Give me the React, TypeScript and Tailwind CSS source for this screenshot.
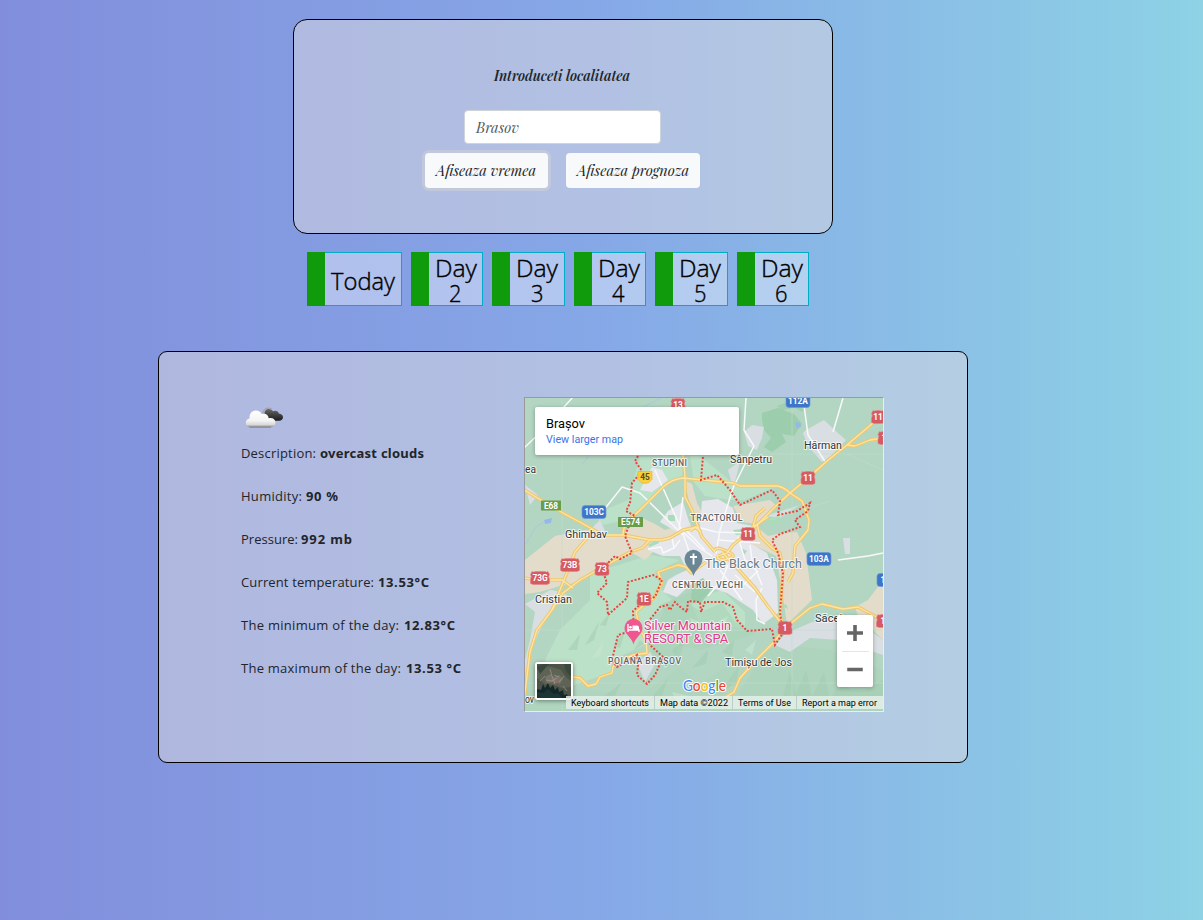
import React from "react";

const MAP_FONT = "Roboto, 'Liberation Sans', sans-serif";

const days = [
  { label: ["Today"], box: "w-[95px]" },
  { label: ["Day", "2"], box: "w-[72px]" },
  { label: ["Day", "3"], box: "w-[73px]" },
  { label: ["Day", "4"], box: "w-[72px]" },
  { label: ["Day", "5"], box: "w-[73px]" },
  { label: ["Day", "6"], box: "w-[72px]" },
];

const readings = [
  { name: "Description:", value: "overcast clouds", w1: 75, x2: 79, w2: 104 },
  { name: "Humidity:", value: "90 %", w1: 61, x2: 65, w2: 32 },
  { name: "Pressure:", value: "992 mb", w1: 57, x2: 60, w2: 51 },
  { name: "Current temperature:", value: "13.53°C", w1: 133, x2: 137, w2: 51 },
  { name: "The minimum of the day:", value: "12.83°C", w1: 158, x2: 163, w2: 51 },
  { name: "The maximum of the day:", value: "13.53 °C", w1: 160, x2: 165, w2: 55 },
];

/* Single line of text fitted to a given width. */
function FitText({ text, width, className, size, height, baseline, x = 0, spacing = false }: {
  text: string; width: number; className: string; size: number; height: number; baseline: number; x?: number; spacing?: boolean;
}) {
  return (
    <svg width={width + x} height={height} className="block shrink-0 overflow-visible">
      <text
        x={x} y={baseline} fontSize={size} textLength={width}
        lengthAdjust={spacing ? "spacing" : "spacingAndGlyphs"}
        className={className}
      >
        {text}
      </text>
    </svg>
  );
}

const serif = "font-['Playfair_Display','Liberation_Serif',serif] italic";
const sans = "font-['Noto_Sans',sans-serif]";
const openSans = "font-['Open_Sans',sans-serif]";

function CloudIcon() {
  return (
    <svg viewBox="0 0 50 35" className="block h-[35px] w-[50px]">
      <defs>
        <linearGradient id="cw" x1="0" y1="0" x2="0" y2="1">
          <stop offset="0" stopColor="#ffffff" />
          <stop offset="0.6" stopColor="#f4f4f4" />
          <stop offset="0.85" stopColor="#d8d8d8" />
          <stop offset="1" stopColor="#8a8a8a" />
        </linearGradient>
        <linearGradient id="cd" x1="0" y1="0" x2="0" y2="1">
          <stop offset="0" stopColor="#6a6a6a" />
          <stop offset="0.45" stopColor="#444" />
          <stop offset="1" stopColor="#1c1c1c" />
        </linearGradient>
      </defs>
      <path d="M24.500 14c-.3-3 1.800-5 4.300-5 2 0 3.500 1.100 4.300 2.300 2.300-1.300 5.300-.4 5.800 2.300 2.400.3 4.100 1.800 4.100 3.700 0 2.200-1.800 3.400-4 3.400H30z" fill="url(#cd)" />
      <path d="M23 14.500c-.2-3.800 1.900-6.400 5.300-6.400 1.500 0 2.600.5 3.500 1.200" fill="none" stroke="#a3a3ab" strokeWidth="1.300" />
      <path d="M10.200 27.200c-2.600 0-4.400-1.900-4.400-4.300 0-2.200 1.500-3.900 3.700-4.300-.4-4.300 2.200-8 6.400-8 2.700 0 4.900 1.500 5.700 3.500 3.400-1.400 7 .6 7.100 4.200 3.800-1.100 6.700 1 6.700 4.300 0 2.500-1.900 4.600-4.500 4.600z" fill="url(#cw)" />
      <path d="M9.500 27.200h21.500" stroke="#787a84" strokeWidth=".7" />
    </svg>
  );
}

const roads = [
  "M524 490L541 500 563 513 587 526 603 535 623 535 650 540 661 540 670 538 683 530 698 527",
  "M603 567L630 552 642 548 650 540",
  "M623 535C623 522 634 516 640 510L650 500 663 487Q672 479 683 478L703 480 733 483 740 486 777 486Q784 487 790 493L802 501 809 520 808 530 795 546 793 573 788 582",
  "M873 423L847 445 827 461 808 478 790 493 777 505 757 525 733 545 727 553 718 556",
  "M765 508L756 516 753 527 768 517",
  "M847 445L855 446 870 440 883 438",
  "M678 398L683 456 685 476 685 497 692 510 698 527 702 537 715 552",
  "M757 524L760 536 772 548 780 553 783 570 780 617 785 628",
  "M722 552L737 568 755 588 767 605 785 628 773 643 758 658 740 678 734 692 724 698",
  "M785 628L810 608 822 604 843 609 858 607 873 615 883 622",
  "M603 567L580 580 563 593 552 610 537 630 530 652 524 700",
  "M587 538L575 552 568 570 560 590 552 610",
  "M524 578L540 580 562 580 573 588",
  "M706 562L691 573 686 567 678 565 658 572 662 583 653 599 645 604 636 612 640 630 646 640 647 653 633 655 620 660 613 667 612 673 600 677 596 684 588 686 580 678 573 677",
  "M690 531L695 527 701 532M714 551Q716 547 722 549T732 554 727 559 717 556",
];

const whiteRoads = [
  "M524 448L545 428 573 397",
  "M746 398L744 430 754 446 733 488 720 530 716 553",
  "M803 398L808 435 826 463",
  "M843 398L833 432",
  "M603 511L622 487 640 493 683 535",
  "M655 470L682 531 692 560",
  "M683 497L679 530",
  "M682 531L700 548 712 556",
  "M684 528L705 550",
  "M701 528L716 532 750 533M700 517L733 520M738 537L745 560 758 572M750 545L752 560 762 585M718 540L760 543",
  "M838 560L868 556 883 553",
  "M720 570L742 600M735 575L755 592M757 572L740 588M762 588L756 600 757 620 765 624",
  "M648 549L661 547 663 553 674 548 680 540M672 538L674 548",
  "M708 596L722 580 728 565",
];

const border =
  "M638 456L635 461 642 471 632 483 630 503 626 511 635 516 628 528 625 536 632 553 620 559 615 556 602 569 607 583 597 593 607 602 608 615 627 598 628 582 653 575 662 580 655 597 645 600 633 611 634 630 618 635 612 660 617 667 637 655 638 665 637 675 647 684 655 675 663 657 650 645 648 622 660 607 667 605 670 610 675 602 679 606 687 612 688 601 700 602 701 612 705 602 723 602 733 607 737 620 747 631 772 629 775 645 783 633 780 613 783 573 778 553 772 540 780 534 800 527 795 520 808 511 810 503 797 511 778 515 780 501 772 490 740 505 730 490 717 475 701 480 703 456";

type Lbl = { t: string; x: number; y: number; w: number; s: number; c?: string; wt?: number };
const labels: Lbl[] = [
  { t: "ea", x: 525, y: 473, w: 11, s: 11 },
  { t: "STUPINI", x: 652, y: 466, w: 35, s: 8.6, c: "#5f6368", wt: 500 },
  { t: "Ghimbav", x: 565, y: 538, w: 42, s: 11 },
  { t: "Sânpetru", x: 730, y: 462.5, w: 42, s: 11 },
  { t: "Hărman", x: 804, y: 449, w: 38, s: 11 },
  { t: "TRACTORUL", x: 690.5, y: 521, w: 52, s: 8.800, c: "#5f6368", wt: 500 },
  { t: "The Black Church", x: 705, y: 568, w: 97, s: 12.500, c: "#647d8b" },
  { t: "CENTRUL VECHI", x: 672, y: 588, w: 71, s: 8.600, c: "#5f6368", wt: 500 },
  { t: "Cristian", x: 535, y: 602.5, w: 37, s: 11 },
  { t: "Silver Mountain", x: 644, y: 630, w: 87, s: 12.500, c: "#e5378a" },
  { t: "RESORT & SPA", x: 644, y: 643, w: 84, s: 12.200, c: "#e5378a" },
  { t: "POIANA BRAȘOV", x: 608, y: 664, w: 73, s: 8.600, c: "#5f6368", wt: 500 },
  { t: "Timișu de Jos", x: 725, y: 666, w: 67, s: 11.200 },
  { t: "Săcele", x: 815, y: 622, w: 33, s: 11 },
  { t: "ov", x: 525, y: 703, w: 9, s: 10 },
];

type Shield = { t: string; x: number; y: number; w: number; k: "red" | "green" | "blue" | "yellow" };
const shields: Shield[] = [
  { t: "13", x: 678, y: 405, w: 13, k: "red" },
  { t: "112A", x: 798, y: 401, w: 24, k: "blue" },
  { t: "11", x: 878, y: 417, w: 12, k: "red" },
  { t: "1", x: 884, y: 438, w: 11, k: "red" },
  { t: "11", x: 808, y: 478, w: 13, k: "red" },
  { t: "45", x: 645, y: 477, w: 14, k: "yellow" },
  { t: "E68", x: 551, y: 505.5, w: 20, k: "green" },
  { t: "103C", x: 594, y: 512, w: 24, k: "blue" },
  { t: "E574", x: 630.5, y: 522, w: 25, k: "green" },
  { t: "11", x: 748, y: 534, w: 13, k: "red" },
  { t: "103A", x: 819, y: 559, w: 24, k: "blue" },
  { t: "1", x: 883, y: 580, w: 12, k: "blue" },
  { t: "73B", x: 570, y: 565, w: 18, k: "red" },
  { t: "73", x: 602, y: 569, w: 13, k: "red" },
  { t: "73G", x: 540, y: 578, w: 18, k: "red" },
  { t: "1E", x: 644, y: 599, w: 13, k: "red" },
  { t: "1", x: 785, y: 628, w: 13, k: "red" },
  { t: "1", x: 883, y: 621, w: 12, k: "red" },
];

const shieldFill = { red: "#d65a62", green: "#689d49", blue: "#3e75c9", yellow: "#f8cf3e" };

function RoadShield({ s }: { s: Shield }) {
  const h = s.k === "green" ? 10 : 13;
  const l = s.x - s.w / 2;
  const r = s.x + s.w / 2;
  const t = s.y - h / 2;
  const b = s.y + h / 2;
  return (
    <g>
      {s.k === "red" ? (
        <path
          d={`M${l + 1} ${t}q1.500 1 3 0H${r - 4}q1.500 1 3 0L${r + 0.5} ${t + 3}q-1.500 2 0 4.500V${b - 1}L${r - 2} ${b}H${l + 2}L${l - 0.5} ${b - 1}V${t + 7.5}q1.500-2.500 0-4.500z`}
          fill={shieldFill.red}
          stroke="#e38488"
          strokeWidth=".6"
        />
      ) : s.k === "yellow" ? (
        <path
          d={`M${l} ${t + 1}H${r}V${b - 4}L${r - 3} ${b - 1}Q${s.x} ${b + 1} ${l + 3} ${b - 1}L${l} ${b - 4}z`}
          fill={shieldFill.yellow} stroke="#e8b92d" strokeWidth=".7" strokeLinejoin="round"
        />
      ) : (
        <rect
          x={l} y={t} width={s.w} height={h}
          rx={s.k === "green" ? 0.5 : 3}
          fill={shieldFill[s.k]}
          stroke={s.k === "blue" ? "#6c98da" : "none"}
          strokeWidth=".7"
        />
      )}
      <text
        x={s.x} y={s.y + 3} textAnchor="middle" fontSize="8.300" fontWeight="700"
        fill={s.k === "yellow" ? "#5b4a14" : "#fff"}
      >
        {s.t}
      </text>
    </g>
  );
}

function MapCanvas() {
  return (
    <svg viewBox="525 398 358 313" className="block h-[313px] w-[358px]" style={{ fontFamily: MAP_FONT }}>
      <rect x="525" y="398" width="358" height="313" fill="#b3d6c2" />
      {/* lighter woodland and hills */}
      <g fill="#bbe1c8">
        <path d="M640 457L683 456 682 476 662 487 640 510 625 520 598 526 600 512 628 500z" />
        <path d="M700 456L733 483 773 488 745 500 730 500 705 496 694 482 690 456z" />
        <path d="M590 574L650 555 680 560 655 572 662 590 672 600 650 620 645 645 612 660 612 672 560 690 545 660 560 630 590 600z" />
        <path d="M690 600L722 590 745 612 745 628 700 625z" />
      </g>
      <g fill="#a9d3b7">
        <path d="M663 612L688 603 701 612 722 603 735 622 755 634 735 640 700 650 680 645 668 670 650 650z" opacity=".6" />
        <path d="M525 690L580 690 640 695 680 668 700 685 740 655 720 711H525z" opacity=".35" />
        <path d="M660 605L690 592 698 603 675 604 665 612z" opacity=".7" />
        <path d="M740 690L765 650 785 645 830 650 883 670V711H740z" opacity=".4" />
      </g>
      <g fill="#a0ccaf" opacity=".5">
        <path d="M600 625L610 612 606 626zM585 645L599 622 594 640zM568 650L580 634 577 650zM614 646L626 628 620 648zM672 650L685 640 678 662zM692 668L708 650 706 664zM722 690L740 664 736 684zM600 700L622 682 614 697zM640 640L634 650 644 644z" />
        <path d="M782 700L790 672 796 694 806 670 812 697 824 672 830 700 842 676 850 690 866 690 883 680V700zM700 640L718 632 708 646zM722 652L734 640 732 656zM650 700L668 678 662 696z" />
      </g>
      <g fill="#c6e6d1" opacity=".6">
        <path d="M590 660L604 640 600 656zM690 618L700 622 692 630zM712 625L728 616 722 634zM672 692L690 696 676 702zM745 650L756 640 752 655z" />
      </g>
      <g fill="#9ccdac">
        <path d="M777 406L800 398 810 403 802 412 795 408 782 410z" opacity=".8" />
        <path d="M762 413L778 408 794 414 802 424 794 436 782 434 786 442 772 452 764 447 771 438 764 430 762 420z" />
        <path d="M692 582L705 574 716 578 708 594 700 604 691 599z" />
      </g>
      {/* open land */}
      <g fill="#e3dccb">
        <path d="M525 560L555 536 585 530 628 536 632 555 603 567 580 582 560 586 540 592 525 594z" />
        <path d="M623 534L640 517 655 524 665 530 690 522 692 530 660 545 645 560 632 553z" />
        <path d="M684 480L692 484 697 503 706 520 702 530 690 505z" />
        <path d="M733 506L752 503 770 500 777 506 757 524 742 522z" />
        <path d="M757 527L768 536 782 533 797 532 806 553 812 600 787 624 782 590 776 556 764 550 752 545 748 538z" />
        <path d="M883 580L868 600 855 607 858 616 883 640z" />
      </g>
      {/* built-up land */}
      <g fill="#e5e7ec">
        <path d="M702 501L718 499 733 508 737 523 753 526 750 543 767 553 777 580 778 613 763 624 753 610 727 593 712 588 703 578 690 585 677 597 663 592 668 580 676 575 687 570 680 556 663 556 648 550 653 543 683 533 700 526z" />
        <path d="M668 511L683 502 690 525 677 532 660 522z" />
        <path d="M652 467L662 470 668 480 652 492 640 490z" />
        <path d="M765 516L800 505 780 518z" opacity=".6" />
      </g>
      <g fill="#d8dee1">
        <path d="M744 432L752 425 764 427 762 438 757 450 748 446z" />
        <path d="M728 470L740 461 737 474 733 488z" />
        <path d="M803 433L806 430 824 420 838 433 846 440 832 455 822 462 808 446z" />
        <path d="M843 538h7v16h-5z" />
        <path d="M775 645L785 634 812 622 850 616 883 640V655L862 648 840 640 810 638 790 652z" />
        <path d="M562 592L568 596 552 610 540 630 532 648 530 665 525 690V660L530 640 535 612 525 604 550 590z" />
        <path d="M637 663L650 652 656 662 645 682z" />
        <path d="M525 485L538 495 530 505zM580 540L600 520 606 533 598 540z" />
      </g>
      <g fill="#abdcba">
        <path d="M733 530l9-1 3 5-9 1zM668 515h7v6h-7zM765 520l14-4 4 6-12 3zM782 606l4-2 2 5zM741 548l6 3-3 4zM648 545l10-6 1 4-9 4z" />
      </g>
      <g fill="#94b9e8">
        <path d="M544 520l8-2-1 5-6 1zM796 422l4 1 1 4-5 1z" />
      </g>
      <g fill="none" stroke="#a6c3ea" strokeWidth=".8">
        <path d="M643 407L655 401 664 396M581 464Q587 461 590 452M525 545L536 527 545 521" />
      </g>
      <g fill="none" stroke="#c3dccf" strokeWidth=".6">
        <path d="M562 398V711M792 398V711M525 683H883M525 630H883M770 454H883M847 454L883 470M770 520L830 501M868 430L883 424" />
      </g>
      <g fill="none" stroke="#f8f9fb" strokeWidth="1.500" strokeLinejoin="round">
        {whiteRoads.map((d) => <path key={d} d={d} />)}
      </g>
      <g fill="none" stroke="#f0c76c" strokeWidth="3.400" strokeLinejoin="round">
        {roads.map((d) => <path key={d} d={d} />)}
      </g>
      <g fill="none" stroke="#fbe6a8" strokeWidth="1.300" strokeLinejoin="round">
        {roads.map((d) => <path key={d} d={d} />)}
      </g>
      <path d={border} fill="none" stroke="#e8453c" strokeWidth="2" strokeDasharray="2 1.700" />
      {shields.map((s) => <RoadShield key={s.t + s.x} s={s} />)}
      {/* church pin */}
      <path d="M693.500 576C691.500 569 684.500 566 684.500 558.800a9 9 0 0 1 18 0C702.500 566 695.500 569 693.500 576z" fill="#6b8796" />
      <path d="M693.500 553.500v11M690 557h7" stroke="#fff" strokeWidth="1.800" />
      {/* hotel pin */}
      <path d="M633.500 644.500C631.500 637 624.500 634.500 624.500 627.800a9 9 0 0 1 18 0C642.500 634.500 635.500 637 633.500 644.500z" fill="#f0568f" />
      <path d="M628 624v8M628.500 630h10.500V632" fill="none" stroke="#fff" strokeWidth="1.300" />
      <path d="M632.500 625.500h4.500q2 0 2 2v2.500h-6.500z" fill="#fff" />
      <circle cx="630.500" cy="627.300" r="1.300" fill="#fff" />
      {labels.map((l) => (
        <text
          key={l.t} x={l.x} y={l.y} fontSize={l.s} fontWeight={l.wt ?? 400} fill={l.c ?? "#2f3437"}
          textLength={l.w} lengthAdjust={l.s < 9 ? "spacing" : "spacingAndGlyphs"}
          stroke="#ffffff" strokeWidth="2" strokeOpacity=".75" strokeLinejoin="round" paintOrder="stroke"
        >
          {l.t}
        </text>
      ))}
      <text
        x="683" y="691" fontSize="15" fontWeight="500" textLength="43"
        lengthAdjust="spacingAndGlyphs"
        stroke="#fff" strokeWidth="2" strokeLinejoin="round" paintOrder="stroke"
        style={{ fontFamily: "Lato, sans-serif" }}
      >
        <tspan fill="#4285f4">G</tspan><tspan fill="#ea4335">o</tspan><tspan fill="#fbbc04">o</tspan><tspan fill="#4285f4">g</tspan><tspan fill="#34a853">l</tspan><tspan fill="#ea4335">e</tspan>
      </text>
    </svg>
  );
}

function SatelliteThumb() {
  return (
    <svg viewBox="0 0 34 34" className="block h-[34px] w-[34px]">
      <rect width="34" height="34" fill="#4c5346" />
      <path d="M0 6l7-4 8 1 9 3 6 8 4 3v6l-9 1-8-3-9-1-8-6z" fill="#5f6355" />
      <path d="M8 13l5-3 4 3 5-2 4 4-3 5-6-2-7 1z" fill="#75746a" />
      <path d="M14 15l6-1 3 4-6 2z" fill="#866f69" />
      <path d="M0 34V25l4 1 2-6 2 4 3-5 2 5 3-3 2 5 3-3 1 5 4-2 1 5 3-1 1 4z" fill="#14282a" />
      <path d="M0 34V28l6 1 5-4 6 5 4-1 4 5z" fill="#1d3a36" opacity=".8" />
      <path d="M0 3l6-3h6L3 10zM27 0h7v13l-5-6z" fill="#39483c" />
      <path d="M3 17l5-5M13 5l2 7 3 8M22 18l5-6M26 22l4 5M9 16l6 1 5-3M17 11l5 2" stroke="#a2a392" strokeWidth=".6" fill="none" />
    </svg>
  );
}

const attribution = "fill-black font-[Roboto,sans-serif]";

function CityMap() {
  return (
    <div className="relative h-[315px] w-[360px] overflow-hidden border border-t-[#9a9a9a] border-r-[#ededed] border-b-[#ededed] border-l-[#9a9a9a]">
      <MapCanvas />
      <div className="absolute top-[9px] left-[10px] flex h-[48px] w-[204px] flex-col rounded-[2px] bg-white pt-[8px] pl-[11px] shadow-[0_1px_4px_rgba(0,0,0,0.3)]">
        <FitText text="Brașov" width={39} size={13.2} height={16} baseline={13} className="fill-black font-[Roboto,sans-serif] [font-weight:450]" />
        <FitText text="View larger map" width={77} size={11.5} height={16} baseline={12} className="fill-[#3a73e8] font-[Roboto,sans-serif]" />
      </div>
      <div className="absolute bottom-[11px] left-[10px] rounded-[3px] border-2 border-white shadow-[0_1px_4px_rgba(0,0,0,0.4)]">
        <SatelliteThumb />
      </div>
      <div className="absolute top-[217px] right-[10px] flex h-[72px] w-[36px] flex-col items-center rounded-[2px] bg-white shadow-[0_1px_4px_rgba(0,0,0,0.3)]">
        <svg viewBox="0 0 36 36" className="h-[36px] w-[36px]"><path d="M18 10v16M10 18h16" stroke="#666" strokeWidth="3.600" /></svg>
        <div className="h-px w-[27px] shrink-0 bg-[#e6e6e6]" />
        <svg viewBox="0 0 36 36" className="h-[35px] w-[36px]"><path d="M10 18h16" stroke="#666" strokeWidth="3.600" /></svg>
      </div>
      <div className="absolute right-0 bottom-[2px] flex h-[13px] divide-x divide-[#bccfc4] bg-[#e9f1ec]/80">
        <div className="w-[89px] pl-[5px]"><FitText text="Keyboard shortcuts" width={78} size={9.8} height={13} baseline={10} className={attribution} /></div>
        <div className="w-[78px] pl-[5px]"><FitText text="Map data ©2022" width={68} size={9.8} height={13} baseline={10} className={attribution} /></div>
        <div className="w-[64px] pl-[5px]"><FitText text="Terms of Use" width={53} size={9.8} height={13} baseline={10} className={attribution} /></div>
        <div className="w-[86px] pl-[5px]"><FitText text="Report a map error" width={75} size={9.8} height={13} baseline={10} className={attribution} /></div>
      </div>
    </div>
  );
}

export default function App() {
  return (
    <div className="flex h-[920px] w-full flex-col items-start overflow-hidden bg-[linear-gradient(90deg,#7f7fd5_-28%,#86a8e7_50%,#91eae4_128%)]">
      <main className="ml-[158px] flex w-[810px] flex-col items-center pt-[19px]">
        <section className="flex h-[215px] w-[540px] flex-col items-center rounded-[14px] border border-black bg-[#dedae0]/50 pt-[45px] pr-[2px]">
          <FitText text="Introduceti localitatea" width={136} size={15.5} height={22} baseline={16} className={`${serif} fill-[#212529] [font-weight:650]`} />
          <div className="mt-[23px] flex h-[34px] w-[197px] items-center rounded-[4px] border border-[#ced4da] bg-white pl-[11px]">
            <FitText text="Brasov" width={43} size={15.5} height={22} baseline={17} className={`${serif} fill-[#52595f]`} />
          </div>
          <div className="mt-[9px] flex gap-[18px]">
            <button className="flex h-[35px] w-[123px] items-center justify-center rounded-[4px] bg-[#f8f9fa] shadow-[0_0_0_3px_rgba(211,212,213,0.5)]">
              <FitText text="Afiseaza vremea" width={100} size={15.5} height={22} baseline={16} className={`${serif} fill-[#212529]`} />
            </button>
            <button className="flex h-[35px] w-[134px] items-center justify-center rounded-[4px] bg-[#f8f9fa]">
              <FitText text="Afiseaza prognoza" width={112} size={15.5} height={22} baseline={16} className={`${serif} fill-[#212529]`} />
            </button>
          </div>
        </section>

        <nav className="mt-[18px] mr-[10px] flex gap-[9px]">
          {days.map((d) => (
            <button key={d.label.join("")} className={`flex h-[54px] ${d.box}`}>
              <span className="h-full w-[18px] shrink-0 bg-[#109b0c]" />
              <span className="flex h-full flex-1 flex-col items-center justify-center border border-l-0 border-[#00adc6] bg-white/37">
                {d.label.map((t) => (
                  <FitText
                    key={t} text={t} size={24.5} height={25} baseline={22.5}
                    width={t === "Today" ? 64 : t === "Day" ? 42 : 12.5}
                    className={`${openSans} fill-black stroke-black font-light [stroke-width:0.4px]`}
                  />
                ))}
              </span>
            </button>
          ))}
        </nav>

        <section className="mt-[45px] flex h-[412px] w-[810px] rounded-[9px] border border-black bg-[#dedae0]/50 pt-[45px] pl-[81px]">
          <div className="flex w-[284px] flex-col">
            <div className="mt-[3px]"><CloudIcon /></div>
            <div className="mt-[9px] flex flex-col gap-[23.1px]">
              {readings.map((r) => (
                <div key={r.name} className="flex h-[20px] pl-[1px]">
                  <FitText spacing text={r.name} width={r.w1} size={13} height={20} baseline={14} className={`${openSans} fill-[#212529]`} />
                  <FitText spacing text={r.value} x={r.x2 - r.w1} width={r.w2} size={13} height={20} baseline={14} className={`${sans} fill-[#212529] font-bold`} />
                </div>
              ))}
            </div>
          </div>
          <CityMap />
        </section>
      </main>
    </div>
  );
}
